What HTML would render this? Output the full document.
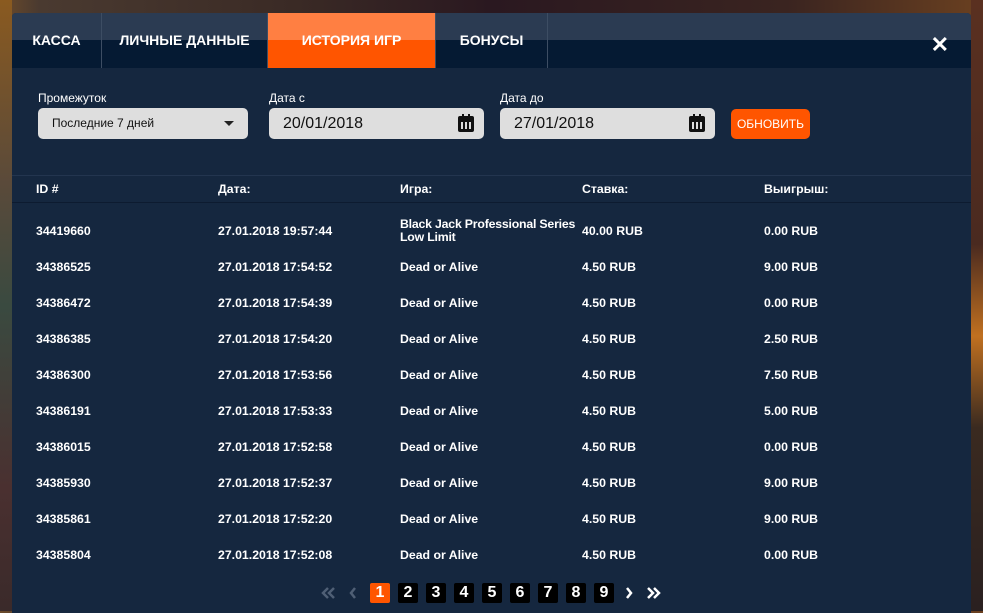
<!DOCTYPE html>
<html><head><meta charset="utf-8"><style>
*{margin:0;padding:0;box-sizing:border-box}
body{width:983px;height:611px;overflow:hidden;font-family:"Liberation Sans",sans-serif;background:linear-gradient(90deg,#6b4a2a 0%,#4a3a30 4%,#3a2a25 30%,#2a1820 50%,#3a2420 80%,#6a4020 100%);position:relative}
.bgl{position:absolute;left:0;top:0;width:12px;height:611px;background:linear-gradient(180deg,#8a5a20,#5a4a3a 30%,#3a4a40 50%,#4a3030 80%,#3a2a2a)}
.bgr{position:absolute;right:0;top:0;width:12px;height:611px;background:linear-gradient(180deg,#5a3020,#4a2a20 40%,#c07020 55%,#3a2a20 70%,#2a2020)}
.m{position:absolute;left:12px;top:13px;width:959px;height:600px;background:#15273f;border-radius:4px 4px 0 0;overflow:hidden}
.tabs{position:absolute;left:0;top:0;width:959px;height:55px;background:linear-gradient(180deg,#2b3b52 0,#2b3b52 27px,#051a33 27px)}
.tab{position:absolute;top:0;height:55px;color:#fff;font-weight:bold;font-size:14px;line-height:54px;text-align:center;border-right:1px solid #3d4d63}
.act{background:linear-gradient(180deg,#ff7f42 0,#ff7f42 27px,#ff5500 27px)}
.x{position:absolute;right:22px;top:19px;color:#fff;font-size:22px;font-weight:bold}
.lbl{position:absolute;top:78px;color:#fff;font-size:12px}
.inp{position:absolute;top:95px;height:31px;background:#dedede;border-radius:5px;color:#111}
.btn{position:absolute;left:719px;top:96px;width:79px;height:30px;background:#ff5500;border-radius:5px;color:#fff;font-size:12px;line-height:30px;text-align:center}
.cal{position:absolute;right:10px;top:8px;width:16px;height:16px;background:#111;border-radius:2px}
.cal:before{content:"";position:absolute;left:3px;top:6px;width:10px;height:7px;background:repeating-linear-gradient(90deg,#ddd 0 2px,#111 2px 4px)}
.cal i{position:absolute;left:4px;top:-2px;width:2px;height:4px;background:#111;box-shadow:6px 0 #111}
.hd{position:absolute;top:162px;left:0;width:959px;height:28px;border-top:1px solid #23354f;border-bottom:1px solid #0d1b30}
.c{position:absolute;color:#fff;font-size:12.3px;font-weight:bold;white-space:nowrap}
.pg{position:absolute;top:570px;height:20px;width:20px;background:#000;color:#fff;font-size:16px;font-weight:bold;text-align:center;line-height:20px;border-radius:2px}
svg{position:absolute}
</style></head><body>
<div class="bgl"></div><div class="bgr"></div>
<div class="m">
<div class="tabs">
<div class="tab" style="left:0;width:90px">КАССА</div>
<div class="tab" style="left:90px;width:166px">ЛИЧНЫЕ ДАННЫЕ</div>
<div class="tab act" style="left:256px;width:168px">ИСТОРИЯ ИГР</div>
<div class="tab" style="left:424px;width:112px">БОНУСЫ</div>
</div>
<div class="x">✕</div>
<div class="lbl" style="left:26px">Промежуток</div>
<div class="lbl" style="left:257px">Дата с</div>
<div class="lbl" style="left:488px">Дата до</div>
<div class="inp" style="left:26px;width:210px;font-size:12px;line-height:31px;padding-left:14px">Последние 7 дней<span style="position:absolute;right:14px;top:13px;border:5px solid transparent;border-top:5px solid #222;border-bottom:0"></span></div>
<div class="inp" style="left:257px;width:215px;font-size:16px;line-height:31px;padding-left:14px">20/01/2018<span class="cal"><i></i></span></div>
<div class="inp" style="left:488px;width:215px;font-size:16px;line-height:31px;padding-left:14px">27/01/2018<span class="cal"><i></i></span></div>
<div class="btn">ОБНОВИТЬ</div>
<div class="hd"></div>
<div class="c" style="left:24px;top:169px">ID #</div>
<div class="c" style="left:206px;top:169px">Дата:</div>
<div class="c" style="left:388px;top:169px">Игра:</div>
<div class="c" style="left:570px;top:169px">Ставка:</div>
<div class="c" style="left:752px;top:169px">Выигрыш:</div>
<div class="c" style="left:24px;top:211px">34419660</div>
<div class="c" style="left:206px;top:211px">27.01.2018 19:57:44</div>
<div class="c" style="left:388px;top:205px;line-height:13px;letter-spacing:-0.2px">Black Jack Professional Series<br>Low Limit</div>
<div class="c" style="left:570px;top:211px">40.00 RUB</div>
<div class="c" style="left:752px;top:211px">0.00 RUB</div>
<svg style="left:309px;top:573px" width="16" height="14" viewBox="0 0 16 14"><path d="M7 2L2 7l5 5M13 2L8 7l5 5" stroke="#4f5f75" stroke-width="2.5" fill="none"/></svg>
<svg style="left:336px;top:573px" width="10" height="14" viewBox="0 0 10 14"><path d="M7 2L3 7l4 5" stroke="#4f5f75" stroke-width="2.5" fill="none"/></svg>
<div class="pg" style="left:358px;background:#ff5500">1</div>
<div class="pg" style="left:386px">2</div>
<div class="pg" style="left:414px">3</div>
<div class="pg" style="left:442px">4</div>
<div class="pg" style="left:470px">5</div>
<div class="pg" style="left:498px">6</div>
<div class="pg" style="left:526px">7</div>
<div class="pg" style="left:554px">8</div>
<div class="pg" style="left:582px">9</div>
<svg style="left:612px;top:573px" width="10" height="14" viewBox="0 0 10 14"><path d="M3 2l4 5-4 5" stroke="#fff" stroke-width="2.5" fill="none"/></svg>
<svg style="left:633px;top:573px" width="16" height="14" viewBox="0 0 16 14"><path d="M3 2l5 5-5 5M9 2l5 5-5 5" stroke="#fff" stroke-width="2.5" fill="none"/></svg>
<div class="c" style="left:24px;top:247px">34386525</div><div class="c" style="left:206px;top:247px">27.01.2018 17:54:52</div><div class="c" style="left:388px;top:247px">Dead or Alive</div><div class="c" style="left:570px;top:247px">4.50 RUB</div><div class="c" style="left:752px;top:247px">9.00 RUB</div>
<div class="c" style="left:24px;top:283px">34386472</div><div class="c" style="left:206px;top:283px">27.01.2018 17:54:39</div><div class="c" style="left:388px;top:283px">Dead or Alive</div><div class="c" style="left:570px;top:283px">4.50 RUB</div><div class="c" style="left:752px;top:283px">0.00 RUB</div>
<div class="c" style="left:24px;top:319px">34386385</div><div class="c" style="left:206px;top:319px">27.01.2018 17:54:20</div><div class="c" style="left:388px;top:319px">Dead or Alive</div><div class="c" style="left:570px;top:319px">4.50 RUB</div><div class="c" style="left:752px;top:319px">2.50 RUB</div>
<div class="c" style="left:24px;top:355px">34386300</div><div class="c" style="left:206px;top:355px">27.01.2018 17:53:56</div><div class="c" style="left:388px;top:355px">Dead or Alive</div><div class="c" style="left:570px;top:355px">4.50 RUB</div><div class="c" style="left:752px;top:355px">7.50 RUB</div>
<div class="c" style="left:24px;top:391px">34386191</div><div class="c" style="left:206px;top:391px">27.01.2018 17:53:33</div><div class="c" style="left:388px;top:391px">Dead or Alive</div><div class="c" style="left:570px;top:391px">4.50 RUB</div><div class="c" style="left:752px;top:391px">5.00 RUB</div>
<div class="c" style="left:24px;top:427px">34386015</div><div class="c" style="left:206px;top:427px">27.01.2018 17:52:58</div><div class="c" style="left:388px;top:427px">Dead or Alive</div><div class="c" style="left:570px;top:427px">4.50 RUB</div><div class="c" style="left:752px;top:427px">0.00 RUB</div>
<div class="c" style="left:24px;top:463px">34385930</div><div class="c" style="left:206px;top:463px">27.01.2018 17:52:37</div><div class="c" style="left:388px;top:463px">Dead or Alive</div><div class="c" style="left:570px;top:463px">4.50 RUB</div><div class="c" style="left:752px;top:463px">9.00 RUB</div>
<div class="c" style="left:24px;top:499px">34385861</div><div class="c" style="left:206px;top:499px">27.01.2018 17:52:20</div><div class="c" style="left:388px;top:499px">Dead or Alive</div><div class="c" style="left:570px;top:499px">4.50 RUB</div><div class="c" style="left:752px;top:499px">9.00 RUB</div>
<div class="c" style="left:24px;top:535px">34385804</div><div class="c" style="left:206px;top:535px">27.01.2018 17:52:08</div><div class="c" style="left:388px;top:535px">Dead or Alive</div><div class="c" style="left:570px;top:535px">4.50 RUB</div><div class="c" style="left:752px;top:535px">0.00 RUB</div>
</div>
</body></html>
